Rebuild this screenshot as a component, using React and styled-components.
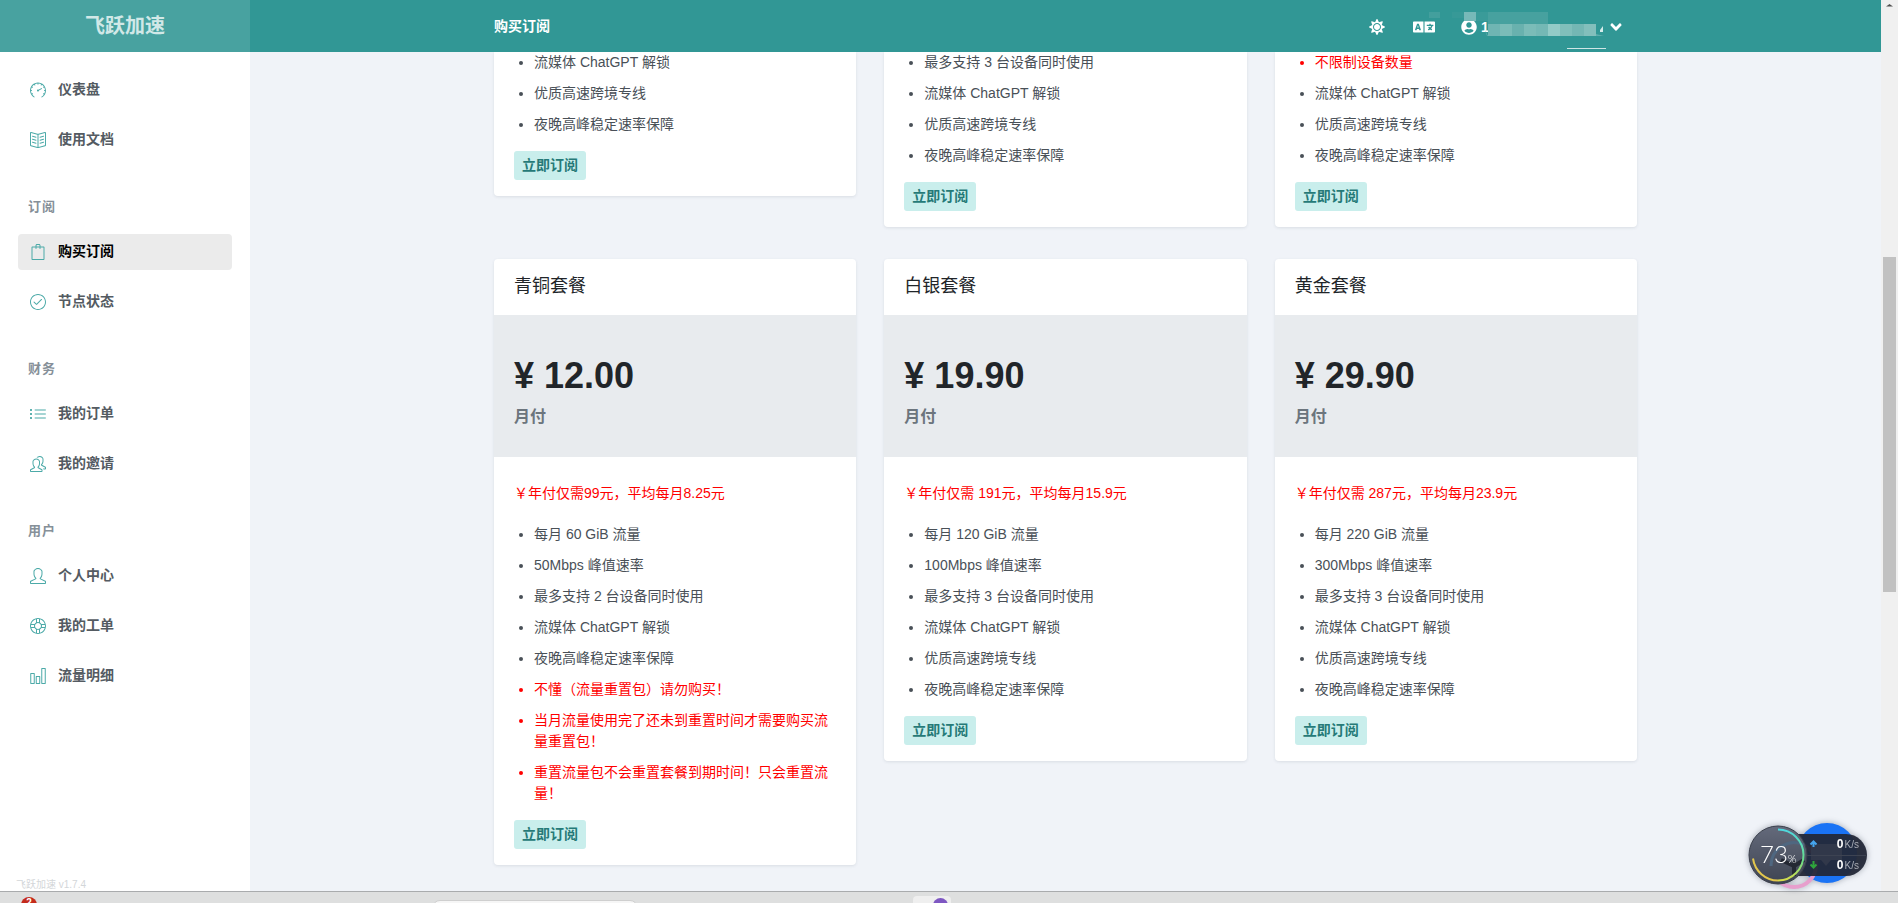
import React, { useState } from 'react';
import styled, { createGlobalStyle } from 'styled-components';
import {
  SlSpeedometer, SlBookOpen, SlBag, SlCheck, SlList, SlPeople, SlUser, SlSupport, SlChart,
} from 'react-icons/sl';
import { FaSun, FaLanguage, FaUserCircle, FaAngleDown } from 'react-icons/fa';

const menu = [
  {
    items: [
      { label: '仪表盘', icon: SlSpeedometer },
      { label: '使用文档', icon: SlBookOpen },
    ],
  },
  {
    title: '订阅',
    items: [
      { label: '购买订阅', icon: SlBag },
      { label: '节点状态', icon: SlCheck },
    ],
  },
  {
    title: '财务',
    items: [
      { label: '我的订单', icon: SlList },
      { label: '我的邀请', icon: SlPeople },
    ],
  },
  {
    title: '用户',
    items: [
      { label: '个人中心', icon: SlUser },
      { label: '我的工单', icon: SlSupport },
      { label: '流量明细', icon: SlChart },
    ],
  },
];

const common = ['流媒体 ChatGPT 解锁', '优质高速跨境专线', '夜晚高峰稳定速率保障'];

const tailPlans = [
  { id: 'a', features: common },
  { id: 'b', features: ['最多支持 3 台设备同时使用', ...common] },
  { id: 'c', warnFirst: true, features: ['不限制设备数量', ...common] },
];

const plans = [
  {
    id: 'bronze',
    name: '青铜套餐',
    price: '12.00',
    yearly: '￥年付仅需99元，平均每月8.25元',
    features: ['每月 60 GiB 流量', '50Mbps 峰值速率', '最多支持 2 台设备同时使用', '流媒体 ChatGPT 解锁', '夜晚高峰稳定速率保障'],
    warnings: ['不懂（流量重置包）请勿购买！', '当月流量使用完了还未到重置时间才需要购买流量重置包！', '重置流量包不会重置套餐到期时间！只会重置流量！'],
  },
  {
    id: 'silver',
    name: '白银套餐',
    price: '19.90',
    yearly: '￥年付仅需 191元，平均每月15.9元',
    features: ['每月 120 GiB 流量', '100Mbps 峰值速率', '最多支持 3 台设备同时使用', ...common],
    warnings: [],
  },
  {
    id: 'gold',
    name: '黄金套餐',
    price: '29.90',
    yearly: '￥年付仅需 287元，平均每月23.9元',
    features: ['每月 220 GiB 流量', '300Mbps 峰值速率', '最多支持 3 台设备同时使用', ...common],
    warnings: [],
  },
];

function Sidebar() {
  const [active, setActive] = useState('购买订阅');
  return (
    <Aside>
      <Brand href="#home">飞跃加速</Brand>
      <Nav>
        {menu.map((group) => (
          <React.Fragment key={group.title || 'top'}>
            {group.title && <NavHeading>{group.title}</NavHeading>}
            {group.items.map(({ label, icon: Icon }) => (
              <NavLink key={label} href="#nav" $active={active === label} onClick={() => setActive(label)}>
                <Icon />
                {label}
              </NavLink>
            ))}
          </React.Fragment>
        ))}
      </Nav>
      <Version>飞跃加速 v1.7.4</Version>
    </Aside>
  );
}

function Header() {
  return (
    <Topbar>
      <Container>
        <TopbarRow>
          <PageTitle>购买订阅</PageTitle>
          <Tools>
            <IconButton aria-label="主题"><FaSun size={16} /></IconButton>
            <IconButton aria-label="语言"><FaLanguage size={22} /></IconButton>
            <UserButton aria-label="账户">
              <FaUserCircle size={16} />
              <UserName>1</UserName>
              <FaAngleDown size={18} />
              <Mosaic />
            </UserButton>
          </Tools>
        </TopbarRow>
      </Container>
    </Topbar>
  );
}

const mosaicTones = ['#6fb5b3', '#7bbcb8', '#69b1ae', '#7bbcb8', '#74b8b5', '#93cbc7', '#80bfbb', '#74b7b4', '#83bfbc'];

function Mosaic() {
  return (
    <MosaicSvg width="178" height="40" viewBox="0 0 178 40" aria-hidden="true">
      <rect x="0" y="0" width="11" height="6" fill="#439f9d" />
      <rect x="23" y="0" width="12" height="6" fill="#379997" />
      <rect x="35" y="0" width="12" height="9" fill="#77b9b8" />
      <rect x="47" y="0" width="12" height="9" fill="#3a9b99" />
      <rect x="59" y="0" width="60" height="12" fill="#47a19f" />
      {mosaicTones.map((tone, i) => (
        <rect key={i} x={59 + i * 12} y="12" width="12" height="12" fill={tone} />
      ))}
      <path d="M56 18l3 6h-1zM167 22l8 2h-8z" fill="#5eaead" />
      <path d="M171 18l3-4v6h-3z" fill="#d5eceb" />
      <rect x="138" y="36" width="39" height="1" fill="#cfe6e5" />
    </MosaicSvg>
  );
}

function SubscribeButton() {
  return <Subscribe type="button">立即订阅</Subscribe>;
}

function PlanCard({ plan }) {
  return (
    <Card>
      <CardTitle>{plan.name}</CardTitle>
      <PriceBox>
        <Price>¥ {plan.price}</Price>
        <Period>月付</Period>
      </PriceBox>
      <CardBody>
        <Yearly>{plan.yearly}</Yearly>
        <Features>
          {plan.features.map((text) => <Feature key={text}>{text}</Feature>)}
          {plan.warnings.map((text) => <Feature key={text} $warn>{text}</Feature>)}
        </Features>
        <SubscribeButton />
      </CardBody>
    </Card>
  );
}

function SpeedWidget() {
  return (
    <Widget>
      <svg width="120" height="68" viewBox="1748 823 120 68" aria-hidden="true">
        <defs>
          <linearGradient id="dial" x1="0" y1="0" x2="0" y2="1">
            <stop offset="0" stopColor="#646a7b" />
            <stop offset="1" stopColor="#3e4452" />
          </linearGradient>
          <linearGradient id="arc" x1="0" y1="0" x2="0" y2="1">
            <stop offset="0" stopColor="#4fd8e0" />
            <stop offset="0.6" stopColor="#67dd8b" />
            <stop offset="1" stopColor="#d8dc4a" />
          </linearGradient>
        </defs>
        <circle cx="1827" cy="853" r="30" fill="#1a73f5" />
        <circle cx="1794" cy="865" r="22" fill="none" stroke="#e79fcd" strokeWidth="4" />
        <path d="M1795 834h51a21 21 0 0 1 0 42h-51z" fill="#232838" fillOpacity="0.95" />
        <path d="M1811 844h31v16h-11l-5 6-5-6h-10z" fill="#31384a" />
        <path d="M1806 855.500h60" stroke="#3d4352" />
        <circle cx="1778" cy="855" r="29" fill="url(#dial)" stroke="#3a3f4b" strokeWidth="1" />
        <path d="M1771 866a23 23 0 0 1 33-21" fill="none" stroke="#4f6780" strokeWidth="3" />
        <path d="M1794 861v15M1794 866l-13-6M1794 866l10-6" fill="none" stroke="#242833" strokeWidth="4" />
        <path d="M1778 829.500a25.500 25.500 0 0 1 0 51" fill="none" stroke="url(#arc)" strokeWidth="2" />
        <path d="M1778 880.500a25.500 25.500 0 0 1-25-22" fill="none" stroke="#e2c64d" strokeWidth="2" />
        <path d="M1813.500 847v-5M1810.500 844.500l3-3 3 3" fill="none" stroke="#45a5ee" strokeWidth="2" />
        <path d="M1813.500 861v6M1810.500 864.500l3 3 3-3" fill="none" stroke="#2fa53c" strokeWidth="2" />
      </svg>
      <Percent>73<small>%</small></Percent>
      <Rates>
        <span><b>0</b>K/s</span>
        <span><b>0</b>K/s</span>
      </Rates>
    </Widget>
  );
}

function ScrollTrack() {
  return (
    <Track>
      <svg width="17" height="17" viewBox="0 0 17 17" aria-hidden="true">
        <path d="M5 6.500L8.500 4L12 6.500z" fill="#505050" />
      </svg>
      <Thumb />
    </Track>
  );
}

function Taskbar() {
  return (
    <Dock>
      <DockCell><DockBadge>2</DockBadge></DockCell>
      <DockSearch />
      <DockTile><DockDot /></DockTile>
    </Dock>
  );
}

export default function App() {
  return (
    <>
      <GlobalStyle />
      <Screen>
        <Page>
          <Sidebar />
          <Content>
            <Header />
            <Main>
              <Container>
                <Grid>
                  {tailPlans.map((plan) => (
                    <Card key={plan.id} $tail>
                      <CardBody $tail>
                        <Features>
                          {plan.features.map((text, i) => (
                            <Feature key={text} $warn={plan.warnFirst && i === 0}>{text}</Feature>
                          ))}
                        </Features>
                        <SubscribeButton />
                      </CardBody>
                    </Card>
                  ))}
                  {plans.map((plan) => <PlanCard key={plan.id} plan={plan} />)}
                </Grid>
              </Container>
            </Main>
          </Content>
          <ScrollTrack />
          <SpeedWidget />
        </Page>
        <Taskbar />
      </Screen>
    </>
  );
}

const GlobalStyle = createGlobalStyle`
  *, *::before, *::after { box-sizing: border-box; }
  body {
    margin: 0;
    background: #f0f3f8;
    color: #495057;
    font-family: "Liberation Sans", "Noto Sans CJK SC", sans-serif;
    font-size: 14px;
    line-height: 21px;
  }
  button { font: inherit; border: 0; cursor: pointer; }
  a { text-decoration: none; }
`;

const Screen = styled.div`
  display: flex;
  flex-direction: column;
  height: 100vh;
  overflow: hidden;
`;

const Page = styled.div`
  position: relative;
  display: flex;
  flex: 1;
  min-height: 0;
`;

const Aside = styled.aside`
  display: flex;
  flex-direction: column;
  flex: 0 0 250px;
  background: #fff;
`;

const Brand = styled.a`
  display: flex;
  align-items: center;
  justify-content: center;
  height: 52px;
  background: #48a2a0;
  color: #d1e8e7;
  font-size: 20px;
  font-weight: 600;
`;

const Nav = styled.nav`
  display: flex;
  flex: 1;
  flex-direction: column;
  gap: 14px;
  padding: 20px 18px;
`;

const NavHeading = styled.div`
  height: 48px;
  padding: 22px 10px 0;
  color: #869099;
  font-size: 13px;
  font-weight: 600;
  letter-spacing: 1px;
  line-height: 26px;
`;

const NavLink = styled.a`
  display: flex;
  align-items: center;
  gap: 12px;
  height: 36px;
  padding: 0 12px 1px;
  border-radius: 4px;
  background: ${({ $active }) => ($active ? '#ebebeb' : 'transparent')};
  color: ${({ $active }) => ($active ? '#000' : '#545b62')};
  font-weight: 600;

  svg {
    width: 16px;
    height: 16px;
    color: #4caaa8;
  }
`;

const Version = styled.div`
  padding: 0 16px;
  color: #d3d6d9;
  font-size: 10px;
  line-height: 12px;
`;

const Content = styled.div`
  display: flex;
  flex: 1;
  flex-direction: column;
  min-width: 0;
`;

const Container = styled.div`
  width: 100%;
  max-width: 1143px;
  margin: 0 auto;
`;

const Topbar = styled.header`
  flex: 0 0 52px;
  background: #319795;
  color: #fff;
`;

const TopbarRow = styled.div`
  display: flex;
  align-items: center;
  justify-content: space-between;
  height: 52px;
`;

const PageTitle = styled.h1`
  margin: 0;
  font-size: 14px;
  font-weight: 600;
`;

const Tools = styled.div`
  display: flex;
  align-items: center;
  padding: 2px 12px 0 0;
`;

const IconButton = styled.button`
  display: flex;
  padding: 0 14px;
  background: none;
  color: #fff;
`;

const UserButton = styled.button`
  position: relative;
  display: flex;
  align-items: center;
  gap: 4px;
  padding: 0 0 0 12px;
  background: none;
  color: #fff;
`;

const UserName = styled.span`
  width: 122px;
  text-align: left;
  font-weight: 600;
`;

const MosaicSvg = styled.svg`
  position: absolute;
  top: -5px;
  left: -20px;
`;

const Main = styled.main`
  flex: 1;
  min-height: 0;
  overflow: hidden;
`;

const Grid = styled.div`
  display: grid;
  grid-template-columns: repeat(3, 1fr);
  align-items: start;
  gap: 32px 28px;
`;

const Card = styled.section`
  overflow: hidden;
  border-radius: ${({ $tail }) => ($tail ? '0 0 4px 4px' : '4px')};
  background: #fff;
  box-shadow: 0 1px 3px rgba(60, 75, 90, 0.12);
`;

const CardTitle = styled.h2`
  margin: 0;
  padding: 13px 20px 15px;
  color: #212529;
  font-size: 18px;
  font-weight: 400;
  line-height: 28px;
`;

const PriceBox = styled.div`
  padding: 38px 20px 28px;
  background: #e8ebee;
`;

const Price = styled.div`
  margin-bottom: 7px;
  color: #212529;
  font-size: 36px;
  font-weight: 700;
  line-height: 45px;
`;

const Period = styled.div`
  color: #6c757d;
  font-size: 16px;
  font-weight: 600;
  line-height: 24px;
`;

const CardBody = styled.div`
  padding: ${({ $tail }) => ($tail ? '0 20px 16px' : '26px 20px 16px')};
`;

const Yearly = styled.p`
  margin: 0 0 20px;
  color: #f00;
`;

const Features = styled.ul`
  margin: 0;
  padding: 0 0 6px 20px;
`;

const Feature = styled.li`
  margin-bottom: 10px;
  color: ${({ $warn }) => ($warn ? '#f00' : '#495057')};
`;

const Subscribe = styled.button`
  display: block;
  height: 29px;
  padding: 0 8px;
  border-radius: 3px;
  background: #c9eeec;
  color: #267a78;
  font-weight: 600;
`;

const Track = styled.div`
  display: flex;
  flex: 0 0 17px;
  flex-direction: column;
  align-items: center;
  background: #f0f0f0;
`;

const Thumb = styled.div`
  width: 13px;
  height: 335px;
  margin-top: 240px;
  background: #c1c1c1;
`;

const Widget = styled.div`
  position: absolute;
  right: 30px;
  bottom: 0;
  width: 120px;
  height: 68px;
  filter: drop-shadow(0 0 3px rgba(40, 50, 70, 0.4));
`;

const Percent = styled.div`
  position: absolute;
  top: 18px;
  left: 12px;
  color: #fff;
  font-family: Lato, "Liberation Sans", sans-serif;
  font-size: 24px;
  font-weight: 300;
  line-height: 26px;

  small { font-size: 11px; }
`;

const Rates = styled.div`
  position: absolute;
  top: 11px;
  right: 9px;
  display: grid;
  color: #a9adb6;
  font-size: 10px;
  line-height: 21px;

  b {
    margin-right: 1px;
    color: #fff;
    font-size: 12px;
  }
`;

const Dock = styled.footer`
  display: flex;
  flex: 0 0 12px;
  align-items: flex-start;
  overflow: hidden;
  border-top: 1px solid #a9abad;
  background: #dedfdf;
`;

const DockCell = styled.div`
  flex: 0 0 432px;
  padding: 5px 0 0 21px;
`;

const DockBadge = styled.div`
  width: 16px;
  height: 16px;
  border-radius: 50%;
  background: #c42b1c;
  color: #fff;
  font-size: 10px;
  font-weight: 700;
  line-height: 12px;
  text-align: center;
`;

const DockSearch = styled.div`
  flex: 0 0 206px;
  height: 24px;
  margin-top: 8px;
  border: 1px solid #cfcfcf;
  border-radius: 8px;
  background: #f6f6f6;
`;

const DockTile = styled.div`
  width: 38px;
  height: 24px;
  margin: 4px 0 0 275px;
  padding: 2px 0 0 20px;
  border-radius: 4px;
  background: #efefef;
`;

const DockDot = styled.div`
  width: 15px;
  height: 15px;
  border-radius: 50%;
  background: #7e57c2;
`;
